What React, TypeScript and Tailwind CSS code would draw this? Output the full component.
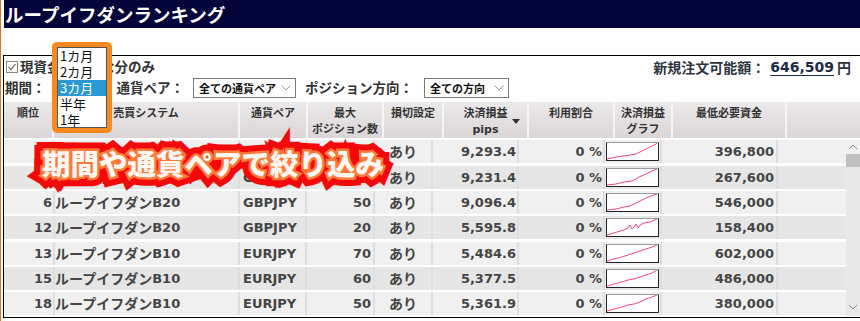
import React from "react";

type Row = {
  rank: string;
  sys: string;
  sysNum: string;
  pair: string;
  max: string;
  pips: string;
  need: string;
  pts: string;
  top: string;
  bg: string;
};

const rows: Row[] = [
  { rank: "3", sys: "ループイフダン", sysNum: "B20", pair: "GBPJPY", max: "40", pips: "9,293.4", need: "396,800", pts: "1,17 10,15 18,14 24,13 30,12 34,10 38,8 42,6 46,4 50,2 51,1", top: "mt-0", bg: "bg-[#f0f0f0]" },
  { rank: "5", sys: "ループイフダン", sysNum: "B20", pair: "GBPJPY", max: "30", pips: "9,231.4", need: "267,600", pts: "1,17 10,16 18,14 26,13 30,11 33,9 38,7 42,5 46,3 51,1", top: "mt-[3px]", bg: "bg-[#e6e6e6]" },
  { rank: "6", sys: "ループイフダン", sysNum: "B20", pair: "GBPJPY", max: "50", pips: "9,096.4", need: "546,000", pts: "1,17 10,16 18,14 24,13 28,11 32,9 36,7 40,5 45,3 51,1", top: "mt-[2px]", bg: "bg-[#f0f0f0]" },
  { rank: "12", sys: "ループイフダン", sysNum: "B20", pair: "GBPJPY", max: "20", pips: "5,595.8", need: "158,400", pts: "1,17 8,15 14,13 18,12 22,10 24,7 26,11 28,9 30,6 32,10 34,7 38,5 44,4 51,1", top: "mt-[2px]", bg: "bg-[#e6e6e6]" },
  { rank: "13", sys: "ループイフダン", sysNum: "B10", pair: "EURJPY", max: "70", pips: "5,484.6", need: "602,000", pts: "1,17 8,15 16,13 22,11 28,9 34,7 40,5 46,3 51,1", top: "mt-[3px]", bg: "bg-[#f0f0f0]" },
  { rank: "15", sys: "ループイフダン", sysNum: "B10", pair: "EURJPY", max: "60", pips: "5,377.5", need: "486,000", pts: "1,17 8,15 16,13 22,11 28,10 34,8 40,6 46,4 51,1", top: "mt-[2px]", bg: "bg-[#e6e6e6]" },
  { rank: "18", sys: "ループイフダン", sysNum: "B10", pair: "EURJPY", max: "50", pips: "5,361.9", need: "380,000", pts: "1,17 8,15 16,13 22,11 28,10 34,8 40,5 46,3 51,1", top: "mt-[2px]", bg: "bg-[#f0f0f0]" },
];

function Chevron({ up }: { up?: boolean }) {
  return (
    <svg width="10" height="6" viewBox="0 0 10 6" className="block">
      <polyline
        points={up ? "1,5 5,1 9,5" : "1,1 5,5 9,1"}
        fill="none"
        stroke="#8a8a8a"
        strokeWidth="1"
      />
    </svg>
  );
}

function SelectBox({ label, w }: { label: string; w: string }) {
  return (
    <div className={`${w} h-[20px] border border-[#7a7a7a] bg-white flex items-center justify-between pl-[5px] pr-[4px]`}>
      <span className="whitespace-nowrap text-[11px] text-[#111] leading-none [font-family:'Noto_Sans_CJK_JP',sans-serif]">{label}</span>
      <svg width="10" height="6" viewBox="0 0 10 6" className="shrink-0">
        <polyline points="0.5,0.5 5,5 9.5,0.5" fill="none" stroke="#9a9a9a" strokeWidth="1" />
      </svg>
    </div>
  );
}

const LABEL = "期間や通貨ペアで絞り込み";

export default function App() {
  return (
    <div className="relative w-[860px] h-[321px] overflow-hidden bg-white border-l border-[#d9762a] [font-family:'DejaVu_Sans','Noto_Sans_CJK_JP',sans-serif]">
      {/* Title */}
      <div className="ml-[3px] h-[28px] bg-[#03043a] flex items-center pl-[1px]">
        <span className="text-white font-bold text-[18.5px] leading-none [font-family:'Noto_Sans_CJK_JP',sans-serif]">
          ループイフダンランキング
        </span>
      </div>
      <div className="h-[27px]" />

      {/* Main box */}
      <div className="ml-[2px] h-[263px] border-l border-t border-b border-black flex flex-col">
        {/* Row 1 */}
        <div className="h-[21px] flex items-center justify-between pl-[2px] pr-[9px]">
          <div className="flex items-center">
            <div className="w-[12px] h-[12px] border border-[#8a8a8a] bg-white flex items-center justify-center mr-[2px]">
              <svg width="10" height="10" viewBox="0 0 10 10">
                <polyline points="1.5,5 4,7.5 8.5,2" fill="none" stroke="#777" strokeWidth="1.2" />
              </svg>
            </div>
            <span className="font-bold text-[13.5px] text-[#333] leading-none [font-family:'Noto_Sans_CJK_JP',sans-serif]">
              現資金で可能な分のみ
            </span>
          </div>
          <div className="flex items-center font-bold leading-none text-[#2e3440]">
            <span className="text-[14px] [font-family:'Noto_Sans_CJK_JP',sans-serif]">新規注文可能額：</span>
            <span className="text-[14px] text-[#1e2b47] underline underline-offset-[3px] ml-[5px]">646,509 </span>
            <span className="text-[14px] ml-[3px] [font-family:'Noto_Sans_CJK_JP',sans-serif]">円</span>
          </div>
        </div>

        {/* Row 2 */}
        <div className="h-[22px] flex items-center pl-[1px] font-bold text-[13.5px] text-[#333] [font-family:'Noto_Sans_CJK_JP',sans-serif]">
          <span className="leading-none">期間：</span>
          <div className="w-[71px]" />
          <span className="leading-none">通貨ペア：</span>
          <div className="ml-[9px]">
            <SelectBox label="全ての通貨ペア" w="w-[103px]" />
          </div>
          <span className="leading-none ml-[9px]">ポジション方向：</span>
          <div className="ml-[11px]">
            <SelectBox label="全ての方向" w="w-[85px]" />
          </div>
        </div>

        {/* Header */}
        <div className="mt-[3px] h-[36px] flex gap-[2px] bg-[#f6f5f5] text-[11px] font-bold text-[#333] leading-[16px]">
          {[
            { w: "w-[48px]", t: ["順位"] },
            { w: "w-[184px]", t: ["売買システム"] },
            { w: "w-[66px]", t: ["通貨ペア"] },
            { w: "w-[74px]", t: ["最大", "ポジション数"] },
            { w: "w-[58px]", t: ["損切設定"] },
            { w: "w-[83px]", t: ["決済損益", "pips"], sort: true },
            { w: "w-[84px]", t: ["利用割合"] },
            { w: "w-[56px]", t: ["決済損益", "グラフ"] },
            { w: "w-[112px]", t: ["最低必要資金"] },
            { w: "flex-1", t: [] },
          ].map((c, i) => (
            <div
              key={i}
              className={`${c.w} relative shrink-0 bg-linear-to-b from-[#ece9ea] to-[#dbd6d8] flex flex-col items-center pt-[4px]`}
            >
              {c.t.map((s, j) => (
                <span key={j} className="whitespace-nowrap">{s}</span>
              ))}
              {c.sort && (
                <svg width="8" height="5" viewBox="0 0 8 5" className="absolute right-[7px] top-[17px]">
                  <polygon points="0,0 8,0 4,5" fill="#333" />
                </svg>
              )}
            </div>
          ))}
        </div>

        {/* Body */}
        <div className="mt-[2px] flex h-[176px]">
          <div className="w-[842px] flex flex-col">
            {rows.map((r, i) => (
              <div key={i} className={`${r.top} h-[23px] flex gap-[2px] bg-[#dedede] text-[#454545] font-bold`}>
                <div className={`${r.bg} w-[49px] flex items-center justify-end pr-[1px] text-[13px]`}>{r.rank}</div>
                <div className={`${r.bg} w-[183px] flex items-center whitespace-nowrap`}>
                  <span className="text-[14px] [font-family:'Noto_Sans_CJK_JP',sans-serif]">{r.sys}</span>
                  <span className="text-[13px]">{r.sysNum}</span>
                </div>
                <div className={`${r.bg} w-[65px] flex items-center pl-[3px] text-[13px]`}>{r.pair}</div>
                <div className={`${r.bg} w-[66px] flex items-center justify-end pr-[2px] text-[13px]`}>{r.max}</div>
                <div className={`${r.bg} w-[56px] flex items-center justify-center text-[14px] [font-family:'Noto_Sans_CJK_JP',sans-serif]`}>あり</div>
                <div className={`${r.bg} w-[84px] flex items-center justify-end pr-[1px] text-[13px]`}>{r.pips}</div>
                <div className={`${r.bg} w-[84px] flex items-center justify-end pr-[1px] text-[13px]`}>0 %</div>
                <div className={`${r.bg} w-[55px] flex items-center justify-center`}>
                  <svg width="53" height="19" viewBox="0 0 53 19" className="block bg-white">
                    <rect x="0.5" y="0.5" width="52" height="18" fill="white" stroke="#222" />
                    <line x1="0.5" y1="0.5" x2="52.5" y2="0.5" stroke="#9a9a9a" />
                    <polyline points={r.pts} fill="none" stroke="#f24a78" strokeWidth="1" />
                  </svg>
                </div>
                <div className={`${r.bg} w-[114px] flex items-center justify-end pr-[2px] text-[13px]`}>{r.need}</div>
                <div className={`${r.bg} flex-1`} />
              </div>
            ))}
          </div>
          {/* Scrollbar */}
          <div className="flex-1 bg-[#e8e8e8] flex flex-col">
            <div className="h-[14px] bg-[#f0f0f0] flex items-center justify-center">
              <Chevron up />
            </div>
            <div className="h-[13px] bg-[#c1c1c1]" />
            <div className="flex-1" />
            <div className="h-[14px] flex items-center justify-center mb-[2px]">
              <Chevron />
            </div>
          </div>
        </div>
      </div>

      {/* Dropdown overlay */}
      <div className="absolute left-[51px] top-[42px] w-[60px] h-[91px] border-[5px] border-[#fa8a1e] rounded-[5px] bg-[#fa8a1e]">
        <div className="w-full h-full bg-white border border-[#555] flex flex-col text-[13px] text-[#111] leading-none [font-family:'Noto_Sans_CJK_JP',sans-serif]">
          <div className="h-[16px] flex items-center pl-[2px]">1カ月</div>
          <div className="h-[17px] flex items-center pl-[2px]">2カ月</div>
          <div className="h-[16px] flex items-center pl-[2px] bg-[#2a9ad6] text-white">3カ月</div>
          <div className="h-[16px] flex items-center pl-[2px]">半年</div>
          <div className="h-[16px] flex items-center pl-[2px]">1年</div>
        </div>
      </div>

      {/* Callout label */}
      <div className="absolute left-[41px] top-[149px] text-[28.5px] font-black leading-none whitespace-nowrap [font-family:'Noto_Sans_CJK_JP',sans-serif]">
        <span aria-hidden="true" className="absolute left-0 top-0 text-[#f20a0a] [-webkit-text-stroke:17px_#f20a0a]">{LABEL}</span>
        <span aria-hidden="true" className="absolute left-0 top-0 text-[#ff7a3a] [-webkit-text-stroke:5px_#ff7a3a]">{LABEL}</span>
        <span className="relative text-[#fff7f2]">{LABEL}</span>
      </div>
    </div>
  );
}
